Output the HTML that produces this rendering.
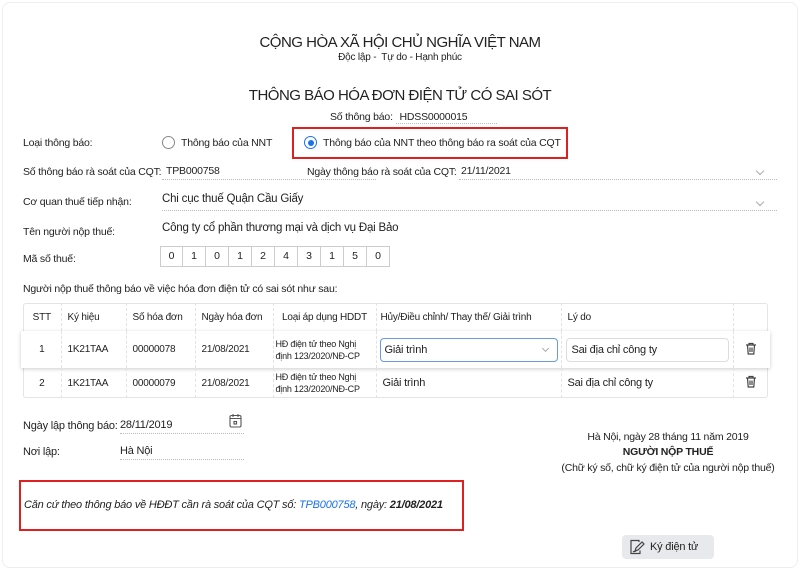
<!DOCTYPE html>
<html><head><meta charset="utf-8">
<style>
*{margin:0;padding:0;box-sizing:border-box}
body{width:800px;height:570px;background:#fff;font-family:"Liberation Sans",sans-serif;color:#222;position:relative;overflow:hidden;font-size:10.5px;letter-spacing:-0.2px}
.a{position:absolute;white-space:nowrap}
.c{text-align:center;left:0;width:800px}
.dot{border-bottom:1px dotted #bbb}
.red{position:absolute;border:2px solid #e02020}
.box{position:absolute;top:246px;width:23px;height:21px;border:1px solid #ccc;text-align:center;line-height:19px;font-size:10.5px}
table{position:absolute;left:23px;top:303px;width:745px;border-collapse:collapse;font-size:10px}
td{border-right:1px dashed #e2e2e2;padding:0 6px;vertical-align:middle}
td:last-child{border-right:none}
.chev{position:absolute;width:6px;height:6px;border-right:1px solid #aaa;border-bottom:1px solid #aaa;transform:rotate(45deg)}
</style></head><body>
<div style="position:absolute;left:2px;top:2px;width:796px;height:566px;border:1px solid #eee;border-radius:8px"></div>
<div class="a c" style="top:34px;font-size:15px;letter-spacing:-0.5px">CỘNG HÒA XÃ HỘI CHỦ NGHĨA VIỆT NAM</div>
<div class="a c" style="top:52px;font-size:10px">Độc lập -&nbsp; Tự do - Hạnh phúc</div>
<div class="a c" style="top:87px;font-size:15px;letter-spacing:-0.5px">THÔNG BÁO HÓA ĐƠN ĐIỆN TỬ CÓ SAI SÓT</div>
<div class="a" style="left:330px;top:111px;font-size:10.5px">Số thông báo: <span class="dot" style="padding:0 30px 0 4px">HDSS0000015</span></div>

<div class="a" style="left:23px;top:137px">Loại thông báo:</div>
<div class="a" style="left:162px;top:136px;width:13px;height:13px;border:1px solid #888;border-radius:50%"></div>
<div class="a" style="left:181px;top:137px">Thông báo của NNT</div>
<div class="red" style="left:292px;top:127px;width:276px;height:32px"></div>
<div class="a" style="left:304px;top:136px;width:13px;height:13px;border:1px solid #1a73e8;border-radius:50%"><div style="margin:2.5px;width:6px;height:6px;border-radius:50%;background:#1a73e8"></div></div>
<div class="a" style="left:323px;top:137px">Thông báo của NNT theo thông báo ra soát của CQT</div>

<div class="a" style="left:23px;top:166px">Số thông báo rà soát của CQT:</div>
<div class="a dot" style="left:162px;top:165px;width:214px;height:15px;padding-left:4px">TPB000758</div>
<div class="a" style="left:307px;top:166px">Ngày thông báo rà soát của CQT:</div>
<div class="a dot" style="left:459px;top:165px;width:318px;height:15px;padding-left:2px">21/11/2021</div>
<div class="chev" style="left:757px;top:168px"></div>

<div class="a" style="left:23px;top:196px">Cơ quan thuế tiếp nhận:</div>
<div class="a dot" style="left:162px;top:193px;width:615px;height:18px;font-size:11.5px">Chi cục thuế Quận Cầu Giấy</div>
<div class="chev" style="left:757px;top:199px"></div>

<div class="a" style="left:23px;top:226px">Tên người nộp thuế:</div>
<div class="a" style="left:162px;top:222px;font-size:11.5px">Công ty cổ phần thương mại và dịch vụ Đại Bảo</div>

<div class="a" style="left:23px;top:253px">Mã số thuế:</div>
<div class="box" style="left:160px">0</div><div class="box" style="left:183px;border-left:none">1</div><div class="box" style="left:206px;border-left:none">0</div><div class="box" style="left:229px;border-left:none">1</div><div class="box" style="left:252px;border-left:none">2</div><div class="box" style="left:275px;border-left:none">4</div><div class="box" style="left:298px;border-left:none">3</div><div class="box" style="left:321px;border-left:none">1</div><div class="box" style="left:344px;border-left:none">5</div><div class="box" style="left:367px;border-left:none">0</div>

<div class="a" style="left:23px;top:283px">Người nộp thuế thông báo về việc hóa đơn điện tử có sai sót như sau:</div>

<div class="a" style="left:23px;top:303px;width:745px;height:95px;border:1px solid #e4e4e4;border-radius:3px"></div>
<div class="a" style="left:21px;top:331px;width:749px;height:37px;box-shadow:0 1px 4px rgba(0,0,0,.2);background:#fff"></div>
<table>
<colgroup><col style="width:38px"><col style="width:65px"><col style="width:69px"><col style="width:78px"><col style="width:103px"><col style="width:185px"><col style="width:172px"><col style="width:35px"></colgroup>
<tr style="height:28px"><td style="text-align:center">STT</td><td>Ký hiệu</td><td>Số hóa đơn</td><td>Ngày hóa đơn</td><td style="text-align:center">Loại áp dụng HDDT</td><td style="padding-left:4px">Hủy/Điều chỉnh/ Thay thế/ Giải trình</td><td>Lý do</td><td></td></tr>
<tr style="height:37px"><td style="text-align:center">1</td><td>1K21TAA</td><td>00000078</td><td>21/08/2021</td><td style="font-size:9px;line-height:12px;padding:0 2px">HĐ điện tử theo Nghị định 123/2020/NĐ-CP</td><td style="padding:0 3px"><div style="border:1px solid #6a9be0;border-radius:4px;height:24px;line-height:22px;padding-left:4px;font-size:11px;position:relative">Giải trình<div class="chev" style="left:162px;top:7px;width:5px;height:5px"></div></div></td><td style="padding:0 4px"><div style="border:1px solid #ddd;border-radius:4px;height:24px;line-height:22px;padding-left:5px;font-size:11px">Sai địa chỉ công ty</div></td><td style="text-align:center"><svg width="12" height="13" viewBox="0 0 12 13" fill="none" stroke="#444" stroke-width="1.2"><path d="M1 3h10M4 3V1.5h4V3M2.5 3l.7 9h5.6l.7-9M5 5.5v4.5M7 5.5v4.5"/></svg></td></tr>
<tr style="height:30px"><td style="text-align:center">2</td><td>1K21TAA</td><td>00000079</td><td>21/08/2021</td><td style="font-size:9px;line-height:12px;padding:0 2px">HĐ điện tử theo Nghị định 123/2020/NĐ-CP</td><td style="font-size:11px">Giải trình</td><td style="font-size:11px">Sai địa chỉ công ty</td><td style="text-align:center"><svg width="12" height="13" viewBox="0 0 12 13" fill="none" stroke="#444" stroke-width="1.2"><path d="M1 3h10M4 3V1.5h4V3M2.5 3l.7 9h5.6l.7-9M5 5.5v4.5M7 5.5v4.5"/></svg></td></tr>
</table>

<div class="a" style="left:23px;top:420px;font-size:11px">Ngày lập thông báo:</div>
<div class="a dot" style="left:120px;top:419px;width:124px;height:15px;font-size:11px">28/11/2019</div>
<svg class="a" style="left:229px;top:413px" width="13" height="15" viewBox="0 0 13 15" fill="none" stroke="#555" stroke-width="1.1"><rect x="1" y="2.5" width="11" height="11.5" rx="1.5"/><path d="M4 1v3M9 1v3M1 5.5h11"/><rect x="5" y="8.5" width="2.5" height="2.5"/></svg>
<div class="a" style="left:23px;top:446px;font-size:11px">Nơi lập:</div>
<div class="a dot" style="left:120px;top:445px;width:124px;height:15px;font-size:11px">Hà Nội</div>

<div class="a" style="left:553px;top:431px;width:230px;text-align:center">Hà Nội, ngày 28 tháng 11 năm 2019</div>
<div class="a" style="left:553px;top:446px;width:230px;text-align:center;font-weight:bold">NGƯỜI NỘP THUẾ</div>
<div class="a" style="left:553px;top:462px;width:230px;text-align:center">(Chữ ký số, chữ ký điện tử của người nộp thuế)</div>

<div class="red" style="left:19px;top:480px;width:445px;height:51px"></div>
<div class="a" style="left:24px;top:499px;font-style:italic;font-size:11px">Căn cứ theo thông báo về HĐĐT cần rà soát của CQT số: <span style="color:#1a73e8">TPB000758</span>, ngày: <b>21/08/2021</b></div>

<div class="a" style="left:622px;top:535px;width:92px;height:24px;background:#e8e9ec;border-radius:4px;line-height:24px;padding-left:28px;font-size:11px">Ký điện tử</div>
<svg class="a" style="left:629px;top:539px" width="16" height="16" viewBox="0 0 16 16" fill="none" stroke="#444" stroke-width="1.2"><path d="M10 3V1.5H2v13h9v-3"/><path d="M6 12l1-3 6-6 2 2-6 6z"/><path d="M4 13c1-1 2 0 3-1"/></svg>
</body></html>
